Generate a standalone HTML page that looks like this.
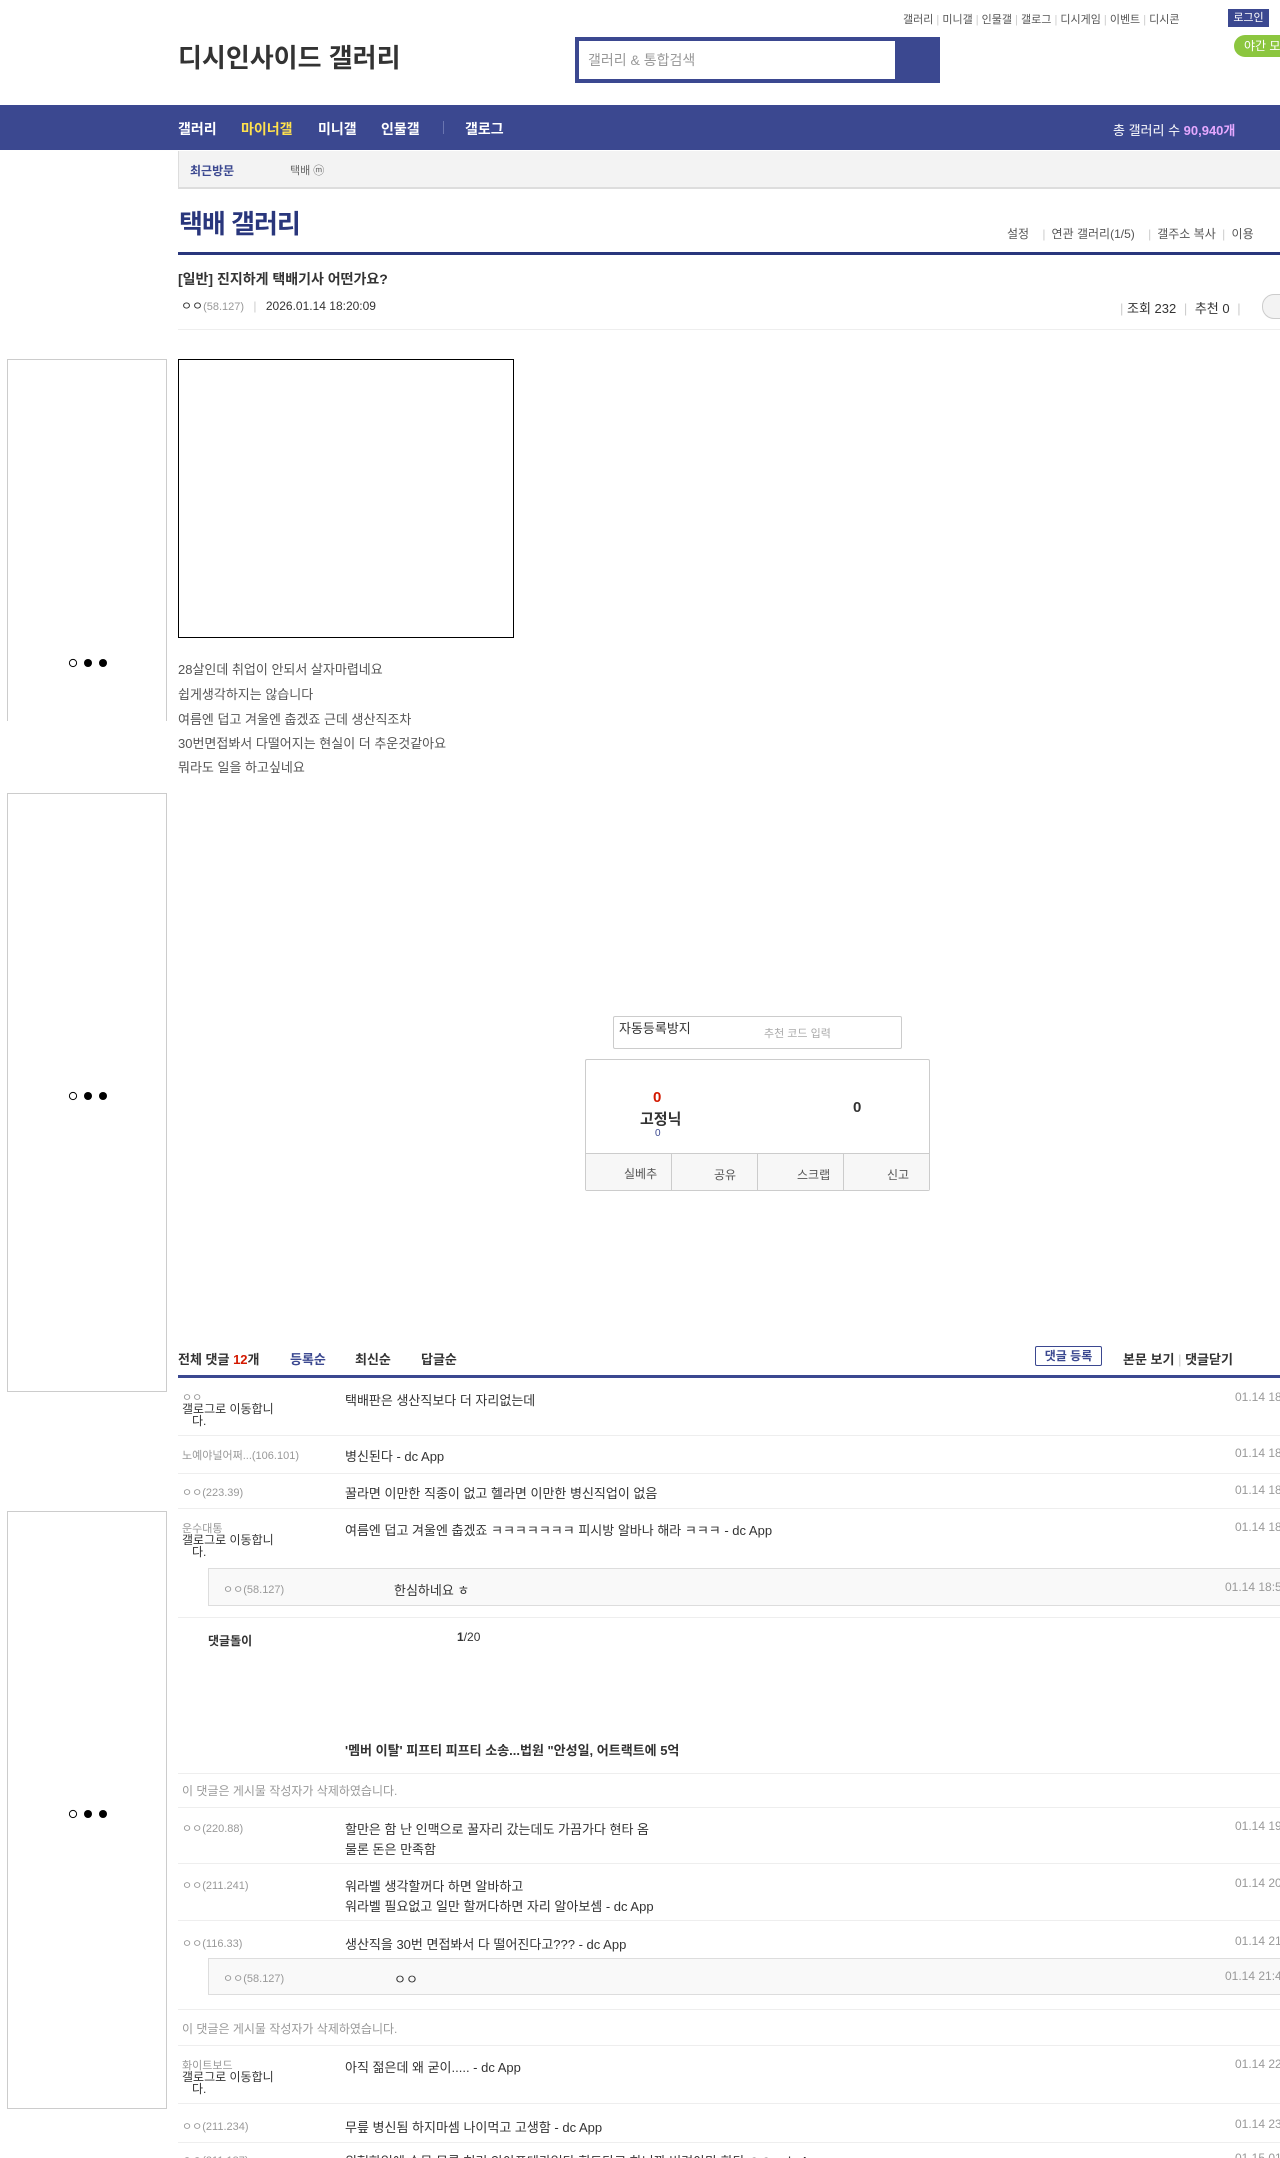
<!DOCTYPE html>
<html><head><meta charset="utf-8">
<style>
*{margin:0;padding:0;box-sizing:border-box}
html,body{width:1280px;height:2158px;overflow:hidden;background:#fff}
body{position:relative;font-family:"Liberation Sans","Noto Sans CJK KR",sans-serif;color:#333;font-size:13px}
.a{position:absolute;white-space:nowrap}
.g{color:#999}
.sep{position:absolute;left:178px;width:1102px;height:1px;background:#eee}
.ad{position:absolute;left:7px;width:160px;border:1px solid #ccc}
.dots{position:absolute;left:68px}
.nick{position:absolute;left:182px;font-size:11px;color:#999;white-space:nowrap}
.ct{position:absolute;left:345px;font-size:13px;color:#333;white-space:nowrap}
.dt{position:absolute;left:1235px;font-size:12px;color:#999;white-space:nowrap}
.bi{font-size:13px;color:#555}
</style></head><body>

<div class="a" style="left:903px;top:11px;font-size:11px;color:#555">갤러리 <span style="color:#ccc">|</span> 미니갤 <span style="color:#ccc">|</span> 인물갤 <span style="color:#ccc">|</span> 갤로그 <span style="color:#ccc">|</span> 디시게임 <span style="color:#ccc">|</span> 이벤트 <span style="color:#ccc">|</span> 디시콘</div>
<div class="a" style="left:1228px;top:9px;width:41px;height:18px;background:#3b4890;color:#fff;font-size:11px;text-align:center;line-height:18px">로그인</div>
<div class="a" style="left:1234px;top:35px;width:60px;height:22px;background:#8cc63f;border-radius:11px;color:#fff;font-size:12px;line-height:22px;padding-left:10px">야간 모드</div>

<div class="a" style="left:178px;top:38px;font-size:26px;color:#333;font-weight:bold">디시인사이드 갤러리</div>
<div class="a" style="left:575px;top:37px;width:365px;height:46px;background:#3b4890"></div>
<div class="a" style="left:579px;top:41px;width:316px;height:38px;background:#fff;color:#999;font-size:14px;line-height:38px;padding-left:9px">갤러리 &amp; 통합검색</div>

<div class="a" style="left:0;top:105px;width:1280px;height:45px;background:#3b4890"></div>
<div class="a" style="left:178px;top:119px;font-size:14px;font-weight:bold;color:#fff">갤러리</div>
<div class="a" style="left:241px;top:119px;font-size:14px;font-weight:bold;color:#ffe14d">마이너갤</div>
<div class="a" style="left:318px;top:119px;font-size:14px;font-weight:bold;color:#fff">미니갤</div>
<div class="a" style="left:381px;top:119px;font-size:14px;font-weight:bold;color:#fff">인물갤</div>
<div class="a" style="left:443px;top:121px;width:1px;height:13px;background:#6a75b0"></div>
<div class="a" style="left:465px;top:119px;font-size:14px;font-weight:bold;color:#fff">갤로그</div>
<div class="a" style="left:1113px;top:120px;font-size:13px;color:#fff">총 갤러리 수 <b style="color:#e5a8ff">90,940개</b></div>

<div class="a" style="left:178px;top:151px;width:1102px;height:38px;background:#f3f3f3;border-bottom:2px solid #ddd;border-left:1px solid #ddd"></div>
<div class="a" style="left:190px;top:162px;font-size:12px;font-weight:bold;color:#3b4890">최근방문</div>
<div class="a" style="left:290px;top:162px;font-size:11px;color:#666">택배 ⓜ</div>

<div class="a" style="left:179px;top:204px;font-size:26px;font-weight:bold;color:#29367c;letter-spacing:-1px">택배 갤러리</div>
<div class="a" style="left:1007px;top:225px;font-size:12px;color:#555">설정 <span style="color:#ccc;margin:0 6px 0 10px">|</span>연관 갤러리(1/5) <span style="color:#ccc;margin:0 6px 0 10px">|</span>갤주소 복사 <span style="color:#ccc;margin:0 3px">|</span> 이용</div>
<div class="a" style="left:178px;top:252px;width:1102px;height:3px;background:#29367c"></div>

<div class="a" style="left:178px;top:269px;font-size:14px;font-weight:bold;color:#333">[일반] 진지하게 택배기사 어떤가요?</div>
<div class="a" style="left:181px;top:297px;font-size:12px;color:#333">ㅇㅇ<span class="g" style="font-size:11px">(58.127)</span> <span style="color:#ccc;margin:0 6px">|</span> 2026.01.14 18:20:09</div>
<div class="a" style="left:1120px;top:298px;font-size:13px;color:#333"><span style="color:#ccc">|</span> 조회 232 <span style="color:#ccc;margin:0 4px">|</span> 추천 0 <span style="color:#ccc;margin:0 4px">|</span></div>
<div class="a" style="left:1262px;top:294px;width:40px;height:25px;border:1px solid #ccc;border-radius:12px;background:#f3f3f3"></div>
<div class="sep" style="top:329px"></div>

<div class="ad" style="top:359px;height:362px;border-bottom:none"></div>
<svg class="dots" style="top:658px" width="40" height="10"><circle cx="5" cy="5" r="3.6" fill="#fff" stroke="#000" stroke-width="1"/><circle cx="20" cy="5" r="4" fill="#000"/><circle cx="35" cy="5" r="4" fill="#000"/></svg>
<div class="ad" style="top:793px;height:599px"></div>
<svg class="dots" style="top:1091px" width="40" height="10"><circle cx="5" cy="5" r="3.6" fill="#fff" stroke="#000" stroke-width="1"/><circle cx="20" cy="5" r="4" fill="#000"/><circle cx="35" cy="5" r="4" fill="#000"/></svg>
<div class="ad" style="top:1511px;height:598px"></div>
<svg class="dots" style="top:1809px" width="40" height="10"><circle cx="5" cy="5" r="3.6" fill="#fff" stroke="#000" stroke-width="1"/><circle cx="20" cy="5" r="4" fill="#000"/><circle cx="35" cy="5" r="4" fill="#000"/></svg>

<div class="a" style="left:178px;top:359px;width:336px;height:279px;border:1px solid #000"></div>
<div class="a bi" style="left:178px;top:659px">28살인데 취업이 안되서 살자마렵네요</div>
<div class="a bi" style="left:178px;top:684px">쉽게생각하지는 않습니다</div>
<div class="a bi" style="left:178px;top:709px">여름엔 덥고 겨울엔 춥겠죠 근데 생산직조차</div>
<div class="a bi" style="left:178px;top:733px">30번면접봐서 다떨어지는 현실이 더 추운것같아요</div>
<div class="a bi" style="left:178px;top:757px">뭐라도 일을 하고싶네요</div>

<div class="a" style="left:613px;top:1016px;width:289px;height:33px;border:1px solid #ccc;border-radius:2px"></div>
<div class="a" style="left:619px;top:1018px;font-size:13px;color:#333">자동등록방지</div>
<div class="a" style="left:764px;top:1025px;font-size:11px;color:#aaa">추천 코드 입력</div>
<div class="a" style="left:585px;top:1059px;width:345px;height:132px;border:1px solid #ccc;border-radius:2px"></div>
<div class="a" style="left:653px;top:1089px;font-size:15px;font-weight:bold;color:#d31900">0</div>
<div class="a" style="left:640px;top:1108px;font-size:15px;font-weight:bold;color:#333">고정닉</div>
<div class="a" style="left:655px;top:1128px;font-size:10px;color:#3b4890">0</div>
<div class="a" style="left:853px;top:1099px;font-size:15px;font-weight:bold;color:#333">0</div>
<div class="a" style="left:586px;top:1153px;width:343px;height:37px;background:#f7f7f7;border-top:1px solid #ccc"></div>
<div class="a" style="left:671px;top:1153px;width:1px;height:37px;background:#ccc"></div>
<div class="a" style="left:757px;top:1153px;width:1px;height:37px;background:#ccc"></div>
<div class="a" style="left:843px;top:1153px;width:1px;height:37px;background:#ccc"></div>
<div class="a" style="left:624px;top:1165px;font-size:12px;color:#555">실베추</div>
<div class="a" style="left:714px;top:1166px;font-size:12px;color:#555">공유</div>
<div class="a" style="left:797px;top:1166px;font-size:12px;color:#555">스크랩</div>
<div class="a" style="left:887px;top:1166px;font-size:12px;color:#555">신고</div>

<div class="a" style="left:178px;top:1349px;font-size:13px;font-weight:bold;color:#333">전체 댓글 <span style="color:#d31900">12</span>개</div>
<div class="a" style="left:290px;top:1349px;font-size:13px;font-weight:bold;color:#3b4890">등록순</div>
<div class="a" style="left:355px;top:1349px;font-size:13px;font-weight:bold;color:#333">최신순</div>
<div class="a" style="left:421px;top:1349px;font-size:13px;font-weight:bold;color:#333">답글순</div>
<div class="a" style="left:1035px;top:1346px;width:67px;height:20px;border:1px solid #3b4890;border-radius:2px;font-size:12px;font-weight:bold;color:#3b4890;text-align:center;line-height:18px">댓글 등록</div>
<div class="a" style="left:1123px;top:1349px;font-size:13px;font-weight:bold;color:#333">본문 보기 <span style="color:#ccc;font-weight:normal">|</span> 댓글닫기</div>
<div class="a" style="left:178px;top:1375px;width:1102px;height:3px;background:#3b4890"></div>

<div class="nick" style="top:1389px">ㅇㅇ</div>
<div class="nick" style="top:1403px;color:#333;font-size:12px;line-height:12px">갤로그로 이동합니<br>&nbsp;&nbsp;&nbsp;다.</div>
<div class="ct" style="top:1390px">택배판은 생산직보다 더 자리없는데</div>
<div class="dt" style="top:1390px">01.14 18:</div>
<div class="sep" style="top:1435px"></div>
<div class="nick" style="top:1447px">노예야널어쩌...(106.101)</div>
<div class="ct" style="top:1446px">병신된다 - dc App</div>
<div class="dt" style="top:1446px">01.14 18:</div>
<div class="sep" style="top:1473px"></div>
<div class="nick" style="top:1484px">ㅇㅇ(223.39)</div>
<div class="ct" style="top:1483px">꿀라면 이만한 직종이 없고 헬라면 이만한 병신직업이 없음</div>
<div class="dt" style="top:1483px">01.14 18:</div>
<div class="sep" style="top:1508px"></div>
<div class="nick" style="top:1520px">운수대통</div>
<div class="nick" style="top:1534px;color:#333;font-size:12px;line-height:12px">갤로그로 이동합니<br>&nbsp;&nbsp;&nbsp;다.</div>
<div class="ct" style="top:1520px">여름엔 덥고 겨울엔 춥겠죠 ㅋㅋㅋㅋㅋㅋㅋ 피시방 알바나 해라 ㅋㅋㅋ - dc App</div>
<div class="dt" style="top:1520px">01.14 18:</div>
<div class="a" style="left:208px;top:1568px;width:1090px;height:38px;background:#f9f9f9;border:1px solid #ddd"></div>
<div class="nick" style="left:223px;top:1581px">ㅇㅇ(58.127)</div>
<div class="ct" style="left:394px;top:1580px">한심하네요 ㅎ</div>
<div class="dt" style="left:1225px;top:1580px">01.14 18:5</div>
<div class="sep" style="top:1617px"></div>
<div class="a" style="left:208px;top:1632px;font-size:12px;font-weight:bold;color:#333">댓글돌이</div>
<div class="a" style="left:457px;top:1630px;font-size:12px;color:#333"><b>1</b>/20</div>
<div class="a" style="left:345px;top:1740px;font-size:13px;font-weight:bold;color:#333">'멤버 이탈' 피프티 피프티 소송...법원 "안성일, 어트랙트에 5억</div>
<div class="sep" style="top:1773px"></div>
<div class="a" style="left:182px;top:1782px;font-size:12px;color:#999">이 댓글은 게시물 작성자가 삭제하였습니다.</div>
<div class="sep" style="top:1807px"></div>
<div class="nick" style="top:1820px">ㅇㅇ(220.88)</div>
<div class="ct" style="top:1819px">할만은 함 난 인맥으로 꿀자리 갔는데도 가끔가다 현타 옴</div>
<div class="ct" style="top:1839px">물론 돈은 만족함</div>
<div class="dt" style="top:1819px">01.14 19:</div>
<div class="sep" style="top:1863px"></div>
<div class="nick" style="top:1877px">ㅇㅇ(211.241)</div>
<div class="ct" style="top:1876px">워라벨 생각할꺼다 하면 알바하고</div>
<div class="ct" style="top:1896px">워라벨 필요없고 일만 할꺼다하면 자리 알아보셈 - dc App</div>
<div class="dt" style="top:1876px">01.14 20:</div>
<div class="sep" style="top:1920px"></div>
<div class="nick" style="top:1935px">ㅇㅇ(116.33)</div>
<div class="ct" style="top:1934px">생산직을 30번 면접봐서 다 떨어진다고??? - dc App</div>
<div class="dt" style="top:1934px">01.14 21:</div>
<div class="a" style="left:208px;top:1958px;width:1090px;height:37px;background:#f9f9f9;border:1px solid #ddd"></div>
<div class="nick" style="left:223px;top:1970px">ㅇㅇ(58.127)</div>
<div class="ct" style="left:394px;top:1969px">ㅇㅇ</div>
<div class="dt" style="left:1225px;top:1969px">01.14 21:4</div>
<div class="sep" style="top:2009px"></div>
<div class="a" style="left:182px;top:2020px;font-size:12px;color:#999">이 댓글은 게시물 작성자가 삭제하였습니다.</div>
<div class="sep" style="top:2045px"></div>
<div class="nick" style="top:2057px">화이트보드</div>
<div class="nick" style="top:2071px;color:#333;font-size:12px;line-height:12px">갤로그로 이동합니<br>&nbsp;&nbsp;&nbsp;다.</div>
<div class="ct" style="top:2057px">아직 젊은데 왜 굳이..... - dc App</div>
<div class="dt" style="top:2057px">01.14 22:</div>
<div class="sep" style="top:2103px"></div>
<div class="nick" style="top:2118px">ㅇㅇ(211.234)</div>
<div class="ct" style="top:2117px">무릎 병신됨 하지마셈 나이먹고 고생함 - dc App</div>
<div class="dt" style="top:2117px">01.14 23:</div>
<div class="sep" style="top:2142px"></div>
<div class="nick" style="top:2152px">ㅇㅇ(211.187)</div>
<div class="ct" style="top:2151px">위험한일에 손목 무릎 허리 안아프데가없다 힘드다고 하니깐 버려야만 한다 ㅇㅇ - dc App</div>
<div class="dt" style="top:2151px">01.15 01:</div>
</body></html>
